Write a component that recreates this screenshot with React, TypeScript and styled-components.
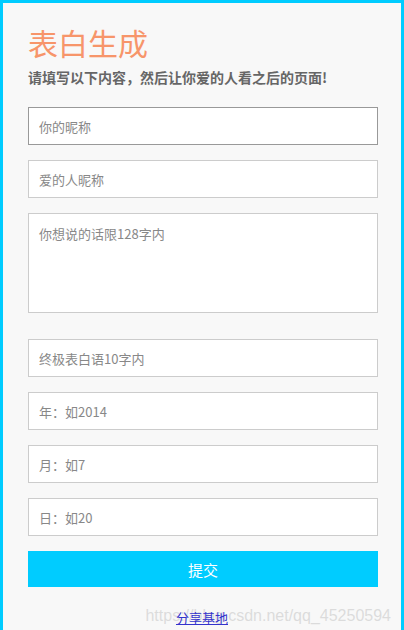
import React from "react";
import styled, { createGlobalStyle } from "styled-components";

const GlobalStyle = createGlobalStyle`
  html, body {
    margin: 0;
    padding: 0;
    background: #fff;
  }
  body {
    font-family: "Noto Sans CJK SC", "Liberation Sans", sans-serif;
  }
`;

const Page = styled.div`
  box-sizing: border-box;
  width: 404px;
  min-height: 640px;
  border: 3px solid #00ccff;
  background: #f8f8f8;
  padding: 18px 25px 20px 25px;
`;

const Title = styled.h1`
  margin: 0;
  font-size: 30px;
  line-height: 42px;
  font-weight: 400;
  color: #f7956a;
`;

const Subtitle = styled.p`
  margin: 4px 0 0;
  font-size: 14px;
  line-height: 20px;
  font-weight: 700;
  color: #666;
`;

const Form = styled.form`
  display: flex;
  flex-direction: column;
  gap: 15px;
  margin-top: 20px;
`;

const Field = styled.input<{ $focused?: boolean }>`
  box-sizing: border-box;
  width: 350px;
  height: 38px;
  padding: 0 10px;
  border: 1px solid ${(p) => (p.$focused ? "#999" : "#ccc")};
  background: #fff;
  font-family: inherit;
  font-size: 13px;
  color: #333;
  outline: none;
  &::placeholder {
    color: #888;
  }
`;

const Area = styled.textarea`
  box-sizing: border-box;
  width: 350px;
  height: 100px;
  padding: 10px;
  margin-bottom: 11px;
  border: 1px solid #ccc;
  background: #fff;
  font-family: inherit;
  font-size: 13px;
  resize: none;
  outline: none;
  &::placeholder {
    color: #888;
  }
`;

const Submit = styled.button`
  width: 350px;
  height: 36px;
  border: none;
  background: #00ccff;
  color: #fff;
  font-family: inherit;
  font-size: 15px;
  cursor: pointer;
`;

const Footer = styled.div`
  position: relative;
  margin-top: 19px;
  line-height: 20px;
  text-align: center;
`;

const ShareLink = styled.a`
  position: relative;
  z-index: 1;
  font-size: 13px;
  color: #3333cc;
  text-decoration: underline;
`;

const Watermark = styled.span`
  position: absolute;
  right: -15px;
  top: 0;
  font-family: "Liberation Sans", sans-serif;
  font-size: 16px;
  line-height: 20px;
  white-space: nowrap;
  color: rgba(200, 200, 200, 0.6);
  pointer-events: none;
`;

const App: React.FC = () => {
  return (
    <>
      <GlobalStyle />
      <Page>
        <Title>表白生成</Title>
        <Subtitle>请填写以下内容，然后让你爱的人看之后的页面!</Subtitle>
        <Form onSubmit={(e) => e.preventDefault()}>
          <Field $focused placeholder="你的昵称" />
          <Field placeholder="爱的人昵称" />
          <Area placeholder="你想说的话限128字内" />
          <Field placeholder="终极表白语10字内" />
          <Field placeholder="年：如2014" />
          <Field placeholder="月：如7" />
          <Field placeholder="日：如20" />
          <Submit type="submit">提交</Submit>
        </Form>
        <Footer>
          <ShareLink href="#">分享基地</ShareLink>
          <Watermark>https://blog.csdn.net/qq_45250594</Watermark>
        </Footer>
      </Page>
    </>
  );
};

export default App;
